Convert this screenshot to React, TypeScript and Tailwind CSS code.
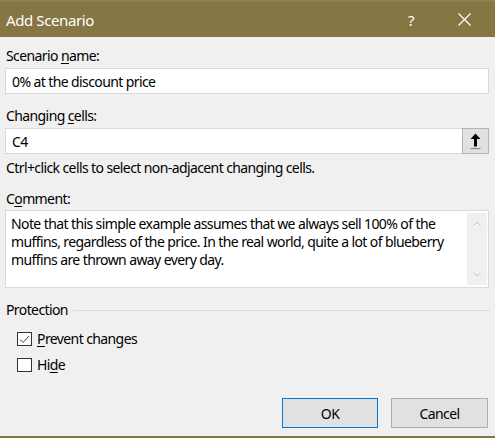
import React from "react";

const font = { fontFamily: '"Noto Sans", "Open Sans", sans-serif' };

const Label: React.FC<{ children: React.ReactNode; className?: string }> = ({ children, className }) => (
  <div className={`text-[14px] leading-[20px] text-black ${className ?? ""}`}>{children}</div>
);

const Checkbox: React.FC<{ checked?: boolean; children: React.ReactNode; className?: string }> = ({
  checked,
  children,
  className,
}) => (
  <div className={`flex items-center ${className ?? ""}`}>
    <div className="ml-[12px] flex h-[14px] w-[15px] items-center justify-center border border-[#333333] bg-white">
      {checked && (
        <svg width="11" height="9" viewBox="0 0 11 9">
          <path d="M1 4.5 L4 7.5 L10 1" fill="none" stroke="#444" strokeWidth="1" />
        </svg>
      )}
    </div>
    <span className="ml-[5px] text-[14px] leading-[20px]">{children}</span>
  </div>
);

export default function App() {
  return (
    <div className="flex h-[438px] w-[495px] flex-col bg-[#f0f0f0] tracking-[-0.6px] text-black" style={font}>
      {/* title bar */}
      <div className="flex h-[37px] items-center border-t-2 border-[#8f8152] bg-[#857644] text-white">
        <span className="ml-[6px] text-[15px] leading-[20px] tracking-[-0.4px]">Add Scenario</span>
        <span className="ml-auto mr-[44px] text-[15px] leading-[20px]">?</span>
        <svg className="mr-[24px]" width="13" height="13" viewBox="0 0 13 13">
          <path d="M0.5 0.5 L12.5 12.5 M12.5 0.5 L0.5 12.5" stroke="#fff" strokeWidth="1.2" />
        </svg>
      </div>

      <div className="flex flex-1 flex-col px-[5px]">
        <Label className="ml-[1px] mt-[9px]">
          Scenario <u className="underline-offset-2">n</u>ame:
        </Label>
        <div className="mt-[2px] flex h-[26px] w-[484px] items-center border border-[#d9d9d9] bg-white pl-[6px] text-[14px]">
          0% at the discount price
        </div>

        <Label className="ml-[1px] mt-[12px]">
          Changing <u className="underline-offset-2">c</u>ells:
        </Label>
        <div className="mt-[2px] flex h-[26px] w-[484px] items-center border border-[#d9d9d9] bg-white pl-[6px] text-[14px]">
          <span>C4</span>
          <div className="-mr-[1px] ml-auto flex h-[26px] w-[27px] items-center justify-center border border-[#b4b4b4] bg-[#e1e1e1]">
            <svg width="11" height="17" viewBox="0 0 11 17">
              <path d="M5.5 0.5 L10.5 6 L7 6 L7 13.5 L4 13.5 L4 6 L0.5 6 Z" fill="#000" />
              <rect x="0.5" y="15" width="10" height="1.2" fill="#888" />
            </svg>
          </div>
        </div>

        <Label className="ml-[1px] mt-[4px]">Ctrl+click cells to select non-adjacent changing cells.</Label>

        <Label className="ml-[1px] mt-[11px]">
          C<u className="underline-offset-2">o</u>mment:
        </Label>
        <div className="mt-[1px] flex h-[78px] w-[484px] border border-[#d9d9d9] bg-white">
          <div className="flex-1 whitespace-nowrap pl-[5px] pt-[4px] text-[14px] leading-[18px]">
            Note that this simple example assumes that we always sell 100% of the
            <br />
            muffins, regardless of the price. In the real world, quite a lot of blueberry
            <br />
            muffins are thrown away every day.
          </div>
          <div className="my-[2px] mr-[1px] flex w-[20px] flex-col items-center justify-between bg-[#f0f0f0] py-[8px]">
            <svg width="8" height="5" viewBox="0 0 8 5">
              <path d="M0.5 4.5 L4 1 L7.5 4.5" fill="none" stroke="#c2c2c2" strokeWidth="1" />
            </svg>
            <svg width="8" height="5" viewBox="0 0 8 5">
              <path d="M0.5 0.5 L4 4 L7.5 0.5" fill="none" stroke="#c2c2c2" strokeWidth="1" />
            </svg>
          </div>
        </div>

        <div className="mt-[12px] flex items-center">
          <Label className="ml-[1px]">Protection</Label>
          <div className="ml-[5px] h-px flex-1 bg-[#dcdcdc]" />
        </div>

        <Checkbox checked className="mt-[9px]">
          <u className="underline-offset-2">P</u>revent changes
        </Checkbox>
        <Checkbox className="mt-[6px]">
          Hi<u className="underline-offset-2">d</u>e
        </Checkbox>

        <div className="mt-[23px] flex justify-end gap-[13px] pr-[2px]">
          <button className="h-[30px] w-[96px] border border-[#0078d7] bg-[#e1e1e1] text-[14px]">OK</button>
          <button className="h-[30px] w-[97px] border border-[#adadad] bg-[#e1e1e1] text-[14px]">Cancel</button>
        </div>
      </div>
      <div className="h-[2px] bg-[#857644]" />
    </div>
  );
}
